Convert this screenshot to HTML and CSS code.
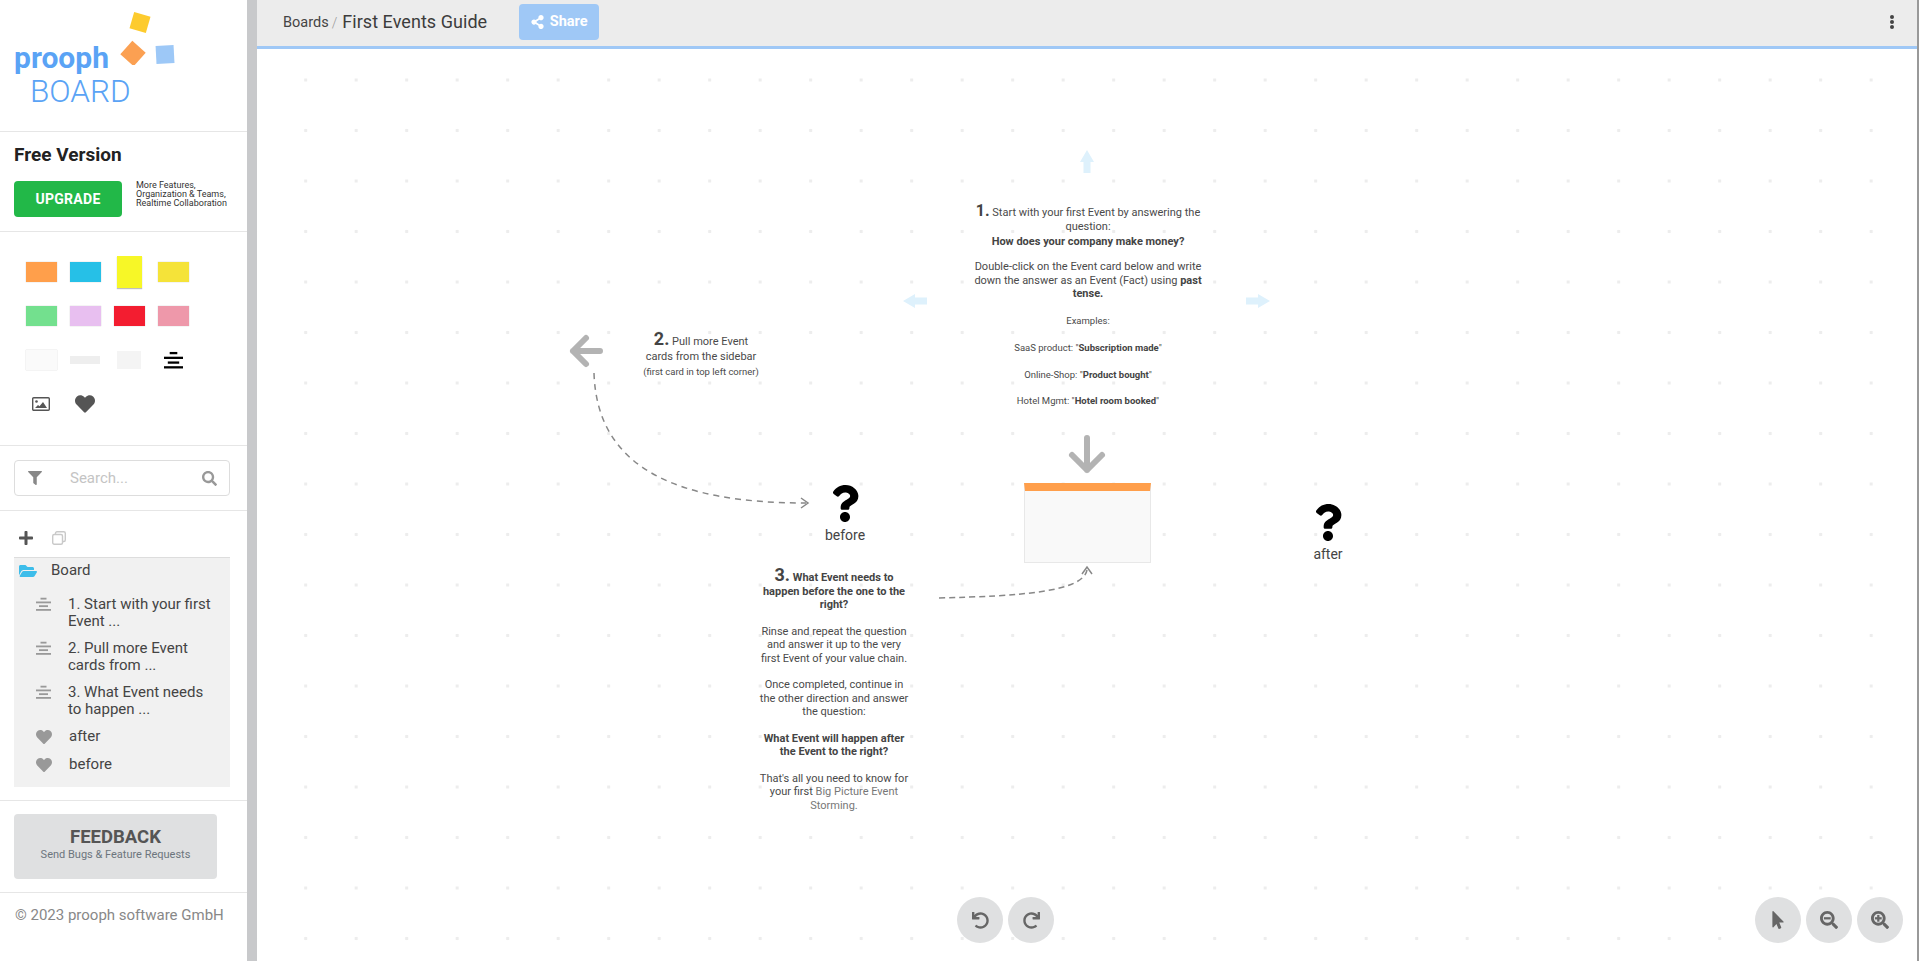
FILE: index.html
```html
<!DOCTYPE html>
<html lang="en">
<head>
  <meta charset="UTF-8">
  <title>First Events Guide - prooph board</title>
  <link rel="stylesheet" href="styles.css">
</head>
<body>
  <!-- icon set -->
  <svg class="icon-defs" aria-hidden="true">
    <symbol id="i-heart" viewBox="0 0 512 512"><path d="M462.3 62.6C407.5 15.9 326 24.3 275.7 76.2L256 96.5l-19.7-20.3C186.1 24.3 104.5 15.9 49.7 62.6c-62.8 53.6-66.1 149.8-9.9 207.9l193.5 199.8c12.5 12.9 32.8 12.9 45.3 0l193.5-199.8c56.3-58.1 53-154.3-9.8-207.9z"/></symbol>
    <symbol id="i-search" viewBox="0 0 512 512"><path d="M505 442.7L405.3 343c-4.5-4.5-10.6-7-17-7H372c27.6-35.3 44-79.7 44-128C416 93.1 322.9 0 208 0S0 93.1 0 208s93.1 208 208 208c48.3 0 92.7-16.4 128-44v16.3c0 6.4 2.5 12.5 7 17l99.7 99.7c9.4 9.4 24.6 9.4 33.9 0l28.3-28.3c9.4-9.4 9.4-24.6.1-34zM208 336c-70.7 0-128-57.2-128-128 0-70.7 57.2-128 128-128 70.7 0 128 57.2 128 128 0 70.7-57.2 128-128 128z"/></symbol>
    <symbol id="i-filter" viewBox="0 0 512 512"><path d="M487.976 0H24.028C2.71 0-8.047 25.866 7.058 40.971L192 225.941V432c0 7.831 3.821 15.17 10.237 19.662l80 55.98C298.02 518.69 320 507.493 320 487.98V225.941l184.947-184.97C520.021 25.896 509.338 0 487.976 0z"/></symbol>
    <symbol id="i-plus" viewBox="0 0 448 512"><path d="M416 208H272V64c0-17.67-14.33-32-32-32h-32c-17.67 0-32 14.33-32 32v144H32c-17.67 0-32 14.33-32 32v32c0 17.67 14.33 32 32 32h144v144c0 17.67 14.33 32 32 32h32c17.67 0 32-14.33 32-32V304h144c17.67 0 32-14.33 32-32v-32c0-17.67-14.33-32-32-32z"/></symbol>
    <symbol id="i-folder" viewBox="0 0 576 512"><path d="M572.694 292.093L500.27 416.248A63.997 63.997 0 0 1 444.989 448H45.025c-18.523 0-30.064-20.093-20.731-36.093l72.424-124.155A64 64 0 0 1 152 256h399.964c18.523 0 30.064 20.093 20.73 36.093zM152 224h328v-48c0-26.51-21.49-48-48-48H272l-64-64H48C21.49 64 0 85.49 0 112v278.046l69.077-118.418C86.214 242.25 117.989 224 152 224z"/></symbol>
    <symbol id="i-share" viewBox="0 0 448 512"><path d="M352 320c-22.608 0-43.387 7.819-59.79 20.895l-102.486-64.054a96.551 96.551 0 0 0 0-41.683l102.486-64.054C308.613 184.181 329.392 192 352 192c53.019 0 96-42.981 96-96S405.019 0 352 0s-96 42.981-96 96c0 7.158.79 14.13 2.276 20.841L155.79 180.895C139.387 167.819 118.608 160 96 160c-53.019 0-96 42.981-96 96s42.981 96 96 96c22.608 0 43.387-7.819 59.79-20.895l102.486 64.054A96.301 96.301 0 0 0 256 416c0 53.019 42.981 96 96 96s96-42.981 96-96-42.981-96-96-96z"/></symbol>
    <symbol id="i-question" viewBox="0 0 384 512"><path d="M202.021 0C122.202 0 70.503 32.703 29.914 91.026c-7.363 10.58-5.093 25.086 5.178 32.874l43.138 32.709c10.373 7.865 25.132 6.026 33.253-4.148 25.049-31.381 43.63-49.449 82.757-49.449 30.764 0 68.816 19.799 68.816 49.631 0 22.552-18.617 34.134-48.993 51.164-35.423 19.86-82.299 44.576-82.299 106.405V320c0 13.255 10.745 24 24 24h72.471c13.255 0 24-10.745 24-24v-5.773c0-42.86 125.268-44.645 125.268-160.627C377.504 66.256 286.902 0 202.021 0zM192 373.459c-38.196 0-69.271 31.075-69.271 69.271 0 38.195 31.075 69.27 69.271 69.27s69.271-31.075 69.271-69.271-31.075-69.27-69.271-69.27z"/></symbol>
    <symbol id="i-undo" viewBox="0 0 512 512"><path d="M212.333 224.333H12c-6.627 0-12-5.373-12-12V12C0 5.373 5.373 0 12 0h48c6.627 0 12 5.373 12 12v78.112C117.773 39.279 184.26 7.47 258.175 8.007c136.906.994 246.448 111.623 246.157 248.532C504.041 393.258 393.12 504 256.333 504c-64.089 0-122.496-24.313-166.51-64.215-5.099-4.622-5.334-12.554-.467-17.42l33.967-33.967c4.474-4.474 11.662-4.717 16.401-.525C170.76 415.336 211.58 432 256.333 432c97.268 0 176-78.716 176-176 0-97.267-78.716-176-176-176-58.496 0-110.28 28.476-142.274 72.333h98.274c6.627 0 12 5.373 12 12v48c0 6.627-5.373 12-12 12z"/></symbol>
    <symbol id="i-pointer" viewBox="0 0 320 512"><path d="M302.189 329.126H196.105l55.831 135.993c3.889 9.428-.555 19.999-9.444 23.999l-49.165 21.427c-9.165 4-19.443-.571-23.332-9.714l-53.053-129.136-86.664 89.138C18.729 472.71 0 463.554 0 447.977V18.299C0 1.899 19.921-6.096 30.277 5.443l284.412 292.542c11.472 11.179 3.007 31.141-12.5 31.141z"/></symbol>
    <symbol id="i-align" viewBox="0 0 20 20"><rect x="6" y="1" width="8" height="2.4"/><rect x="0" y="6" width="20" height="2.4"/><rect x="4" y="11" width="12" height="2.4"/><rect x="0" y="16" width="20" height="2.4"/></symbol>
  </svg>

  <div class="app">
    <aside class="sidebar">
      <section class="logo">
        <span class="logo-prooph">prooph</span>
        <span class="logo-board">BOARD</span>
        <svg class="logo-marks" width="60" height="60" viewBox="120 5 60 60">
          <rect x="131.5" y="14" width="17" height="17" fill="#fdcb2e" transform="rotate(16 140 22.5)"/>
          <rect x="124" y="44.5" width="18" height="18" fill="#fba052" transform="rotate(42 133 53.500)"/>
          <rect x="156" y="45.5" width="18" height="18" fill="#9dc8f7" transform="rotate(-3 165 54)"/>
        </svg>
      </section>

      <section class="plan">
        <h2>Free Version</h2>
        <div class="plan-row">
          <a class="btn-upgrade">UPGRADE</a>
          <p>More Features,<br>Organization &amp; Teams,<br>Realtime Collaboration</p>
        </div>
      </section>

      <section class="palette">
        <div class="cell"><span class="swatch sw-orange"></span></div>
        <div class="cell"><span class="swatch sw-blue"></span></div>
        <div class="cell"><span class="sticky"></span></div>
        <div class="cell"><span class="swatch sw-yellow"></span></div>
        <div class="cell"><span class="swatch sw-green"></span></div>
        <div class="cell"><span class="swatch sw-lilac"></span></div>
        <div class="cell"><span class="swatch sw-red"></span></div>
        <div class="cell"><span class="swatch sw-pink"></span></div>
        <div class="cell"><span class="swatch sw-white"></span></div>
        <div class="cell"><span class="bar"></span></div>
        <div class="cell"><span class="square"></span></div>
        <div class="cell"><svg class="pal-align" width="19" height="19"><use href="#i-align"/></svg></div>
        <div class="cell">
          <svg class="pal-image" width="18" height="14" viewBox="0 0 18 14">
            <rect x="0.7" y="0.7" width="16.6" height="12.6" rx="1" fill="none" stroke="#555" stroke-width="1.4"/>
            <circle cx="4.5" cy="4.5" r="1.3" fill="#555"/>
            <path d="M3 11l3-3 1.5 1.2L11 5l4 6z" fill="#555"/>
          </svg>
        </div>
        <div class="cell"><svg class="pal-heart" width="20" height="20"><use href="#i-heart"/></svg></div>
      </section>

      <section class="search">
        <div class="search-box">
          <svg class="search-filter" width="14" height="14"><use href="#i-filter"/></svg>
          <span class="search-text">Search...</span>
          <svg class="search-icon" width="15" height="15"><use href="#i-search"/></svg>
        </div>
      </section>

      <section class="layers">
        <div class="layers-tools">
          <svg class="tool-plus" width="14" height="16"><use href="#i-plus"/></svg>
          <svg width="14" height="14" viewBox="0 0 14 14" fill="none" stroke="#c9c9c9" stroke-width="1.4">
            <rect x="3.5" y="0.7" width="9.8" height="9.8" rx="1.5"/>
            <rect x="0.7" y="3.5" width="9.8" height="9.8" rx="1.5" fill="#fff"/>
          </svg>
        </div>
        <div class="tree">
          <div class="tree-root">
            <svg class="tree-folder" width="18" height="16"><use href="#i-folder"/></svg>
            <span>Board</span>
          </div>
          <div class="tree-item">
            <svg width="15" height="15"><use href="#i-align"/></svg>
            <span>1. Start with your first Event ...</span>
          </div>
          <div class="tree-item">
            <svg width="15" height="15"><use href="#i-align"/></svg>
            <span>2. Pull more Event cards from ...</span>
          </div>
          <div class="tree-item">
            <svg width="15" height="15"><use href="#i-align"/></svg>
            <span>3. What Event needs to happen ...</span>
          </div>
          <div class="tree-item">
            <svg width="16" height="16"><use href="#i-heart"/></svg>
            <span>after</span>
          </div>
          <div class="tree-item">
            <svg width="16" height="16"><use href="#i-heart"/></svg>
            <span>before</span>
          </div>
        </div>
      </section>

      <section class="feedback">
        <a class="btn-feedback">
          <strong>FEEDBACK</strong>
          <small>Send Bugs &amp; Feature Requests</small>
        </a>
      </section>

      <footer class="copyright">© 2023 prooph software GmbH</footer>
    </aside>

    <div class="gutter"></div>

    <main class="main">
      <header class="topbar">
        <span class="crumb">Boards</span>
        <span class="crumb-sep">/</span>
        <span class="board-title">First Events Guide</span>
        <a class="btn-share">
          <svg width="13" height="14"><use href="#i-share"/></svg>
          Share
        </a>
        <svg class="menu-dots" width="4" height="14" viewBox="0 0 4 14" fill="#444">
          <circle cx="2" cy="2" r="2"/><circle cx="2" cy="7" r="2"/><circle cx="2" cy="12" r="2"/>
        </svg>
      </header>

      <div class="canvas">
        <!-- arrows, viewBox uses page coordinates -->
        <svg class="canvas-lines" width="1660" height="912" viewBox="257 49 1660 912" fill="none">
          <g fill="#def1fc">
            <path d="M1087 150l7 12h-3.500v11h-7v-11h-3.500z"/>
            <path d="M903 301l12-7v3.500h12v7h-12v3.500z"/>
            <path d="M1270 301l-12-7v3.500h-12v7h12v3.500z"/>
          </g>
          <g stroke="#b3b3b3" stroke-width="6" stroke-linecap="round" stroke-linejoin="round">
            <path d="M1087 438v32M1072 455l15 15 15-15"/>
            <path d="M600 351h-27M586 338l-13 13 13 13"/>
          </g>
          <g stroke="#888" stroke-width="1.500">
            <path stroke-dasharray="6 5" d="M594 373C597 470 680 503 806 503"/>
            <path d="M801 498l7 5-7 5"/>
            <path stroke-dasharray="6 4" d="M939 598C1020 596 1083 592 1087 570"/>
            <path d="M1082 574l5-7 5 7"/>
          </g>
        </svg>

        <div class="note note-1">
          <p class="intro"><b class="num">1.</b> Start with your first Event by answering the question:<strong class="lead">How does your company make money?</strong></p>
          <p class="gap">Double-click on the Event card below and write down the answer as an Event (Fact) using <strong>past tense.</strong></p>
          <p class="fine gap">Examples:</p>
          <p class="fine">SaaS product: "<strong>Subscription made</strong>"</p>
          <p class="fine">Online-Shop: "<strong>Product bought</strong>"</p>
          <p class="fine">Hotel Mgmt: "<strong>Hotel room booked</strong>"</p>
        </div>

        <div class="note note-2">
          <p><b class="num">2.</b> Pull more Event<br>cards from the sidebar<br><span class="fine">(first card in top left corner)</span></p>
        </div>

        <div class="note note-3">
          <p><b class="num">3.</b> <strong>What Event needs to happen before the one to the right?</strong></p>
          <p>Rinse and repeat the question and answer it up to the very first Event of your value chain.</p>
          <p>Once completed, continue in the other direction and answer the question:</p>
          <p><strong>What Event will happen after the Event to the right?</strong></p>
          <p>That's all you need to know for your first <span class="link">Big Picture Event Storming.</span></p>
        </div>

        <div class="event-card"></div>

        <div class="hotspot hotspot-before">
          <svg width="28" height="37"><use href="#i-question"/></svg>
          <span>before</span>
        </div>
        <div class="hotspot hotspot-after">
          <svg width="28" height="37"><use href="#i-question"/></svg>
          <span>after</span>
        </div>

        <div class="controls controls-history">
          <a class="round-btn"><svg width="17" height="17"><use href="#i-undo"/></svg></a>
          <a class="round-btn"><svg class="mirror" width="17" height="17"><use href="#i-undo"/></svg></a>
        </div>
        <div class="controls controls-zoom">
          <a class="round-btn"><svg width="12" height="18"><use href="#i-pointer"/></svg></a>
          <a class="round-btn">
            <svg width="18" height="18" viewBox="0 0 512 512"><use href="#i-search" width="512" height="512"/><rect x="112" y="176" width="192" height="64"/></svg>
          </a>
          <a class="round-btn">
            <svg width="18" height="18" viewBox="0 0 512 512"><use href="#i-search" width="512" height="512"/><rect x="112" y="176" width="192" height="64"/><rect x="176" y="112" width="64" height="192"/></svg>
          </a>
        </div>
      </div>
    </main>
  </div>
</body>
</html>
```

FILE: styles.css
```css
* {
  box-sizing: border-box;
}

html, body {
  height: 100%;
  margin: 0;
}

body {
  font-family: Roboto, "Liberation Sans", sans-serif;
  color: #444;
  background: #fff;
  overflow: hidden;
}

p, h2 {
  margin: 0;
}

.icon-defs {
  display: none;
}

.app {
  display: flex;
  height: 100vh;
}

/* sidebar */

.sidebar {
  width: 247px;
  flex-shrink: 0;
  display: flex;
  flex-direction: column;
}

.sidebar section {
  border-bottom: 1px solid #e6e6e6;
}

.gutter {
  width: 10px;
  flex-shrink: 0;
  background: #c8c9cb;
}

.logo {
  position: relative;
  height: 132px;
  padding: 41px 0 0 14px;
}

.logo-prooph {
  display: block;
  font-size: 30px;
  font-weight: 700;
  line-height: 34px;
  color: #5aa3f5;
}

.logo-board {
  display: block;
  margin: -1px 0 0 16px;
  font-size: 31.5px;
  font-weight: 300;
  line-height: 36px;
  color: #5aa3f5;
}

.logo-marks {
  position: absolute;
  left: 120px;
  top: 5px;
}

.plan {
  height: 100px;
  padding: 12px 14px 0;
}

.plan h2 {
  font-size: 19px;
  font-weight: 700;
  line-height: 22px;
  color: #222;
}

.plan-row {
  display: flex;
  align-items: flex-start;
  gap: 14px;
  margin-top: 15px;
}

.plan-row p {
  font-size: 9px;
  line-height: 9px;
  color: #333;
}

.btn-upgrade {
  width: 108px;
  height: 36px;
  flex-shrink: 0;
  display: flex;
  align-items: center;
  justify-content: center;
  background: #22b848;
  border-radius: 4px;
  color: #fff;
  font-size: 14px;
  font-weight: 700;
  letter-spacing: .3px;
}

.palette {
  height: 214px;
  padding: 18px 18px 0 19px;
  display: grid;
  grid-template-columns: repeat(4, 44px);
  grid-auto-rows: 44px;
}

.cell {
  display: flex;
  align-items: center;
  justify-content: center;
}

.swatch {
  width: 31px;
  height: 20px;
  box-shadow: 0 0 1px rgba(0, 0, 0, .25);
}

.sw-orange { background: #ff9f4b; }
.sw-blue { background: #26c0e7; }
.sw-yellow { background: #f5e339; }
.sw-green { background: #73e08e; }
.sw-lilac { background: #e8bff0; }
.sw-red { background: #f31d30; }
.sw-pink { background: #ee98aa; }
.sw-white { background: #fafafa; }

.sticky {
  width: 25px;
  height: 32px;
  background: #f7f727;
  box-shadow: 0 1px 1px rgba(0, 0, 0, .25);
}

.bar {
  width: 30px;
  height: 8px;
  background: #eee;
}

.square {
  width: 24px;
  height: 18px;
  background: #f4f4f4;
}

.pal-align {
  fill: #000;
}

.pal-heart {
  fill: #555;
}

.search {
  height: 65px;
  padding: 14px 17px 0 14px;
}

.search-box {
  height: 36px;
  display: flex;
  align-items: center;
  padding: 0 12px 0 13px;
  border: 1px solid #ddd;
  border-radius: 4px;
}

.search-filter {
  fill: #888;
}

.search-text {
  flex: 1;
  margin-left: 28px;
  font-size: 15px;
  color: #c4c4c4;
}

.search-icon {
  fill: #999;
}

.layers {
  height: 290px;
  padding: 0 17px 0 14px;
}

.layers-tools {
  height: 46px;
  display: flex;
  align-items: center;
  gap: 19px;
  padding: 7px 0 0 5px;
}

.tool-plus {
  fill: #555;
}

.tree {
  height: 230px;
  background: #f1f1f1;
  border-top: 1px solid #ddd;
  font-size: 15px;
  line-height: 17px;
  color: #444;
}

.tree-root {
  display: flex;
  align-items: center;
  gap: 14px;
  padding: 4px 0 0 5px;
  margin-bottom: 17px;
}

.tree-folder {
  fill: #3dbdea;
}

.tree-item {
  display: flex;
  align-items: flex-start;
  gap: 17px;
  min-height: 28px;
  padding: 0 14px 10px 22px;
}

.tree-item svg {
  flex-shrink: 0;
  fill: #999;
  margin-top: 1px;
}

.feedback {
  height: 92px;
  padding: 13px 30px 0 14px;
}

.btn-feedback {
  height: 65px;
  padding-bottom: 5px;
  display: flex;
  flex-direction: column;
  align-items: center;
  justify-content: center;
  background: #dfe0e1;
  border-radius: 4px;
}

.btn-feedback strong {
  font-size: 18.5px;
  line-height: 22px;
  color: #555;
}

.btn-feedback small {
  font-size: 11px;
  line-height: 14px;
  color: #6c757d;
}

.copyright {
  padding: 13px 0 0 15px;
  font-size: 15px;
  color: #888;
}

/* main */

.main {
  flex: 1;
  min-width: 0;
  display: flex;
  flex-direction: column;
  border-right: 2px solid #999;
}

.topbar {
  height: 49px;
  flex-shrink: 0;
  display: flex;
  align-items: center;
  padding: 0 0 3px 26px;
  background: #ececec;
  border-bottom: 3px solid #9fc8f6;
}

.crumb {
  margin-top: 2px;
  font-size: 14.5px;
  color: #444;
}

.crumb-sep {
  margin: 3px 5px 0 3px;
  font-size: 14px;
  font-weight: 300;
  color: #999;
}

.board-title {
  font-size: 18px;
  letter-spacing: .05px;
  color: #3c3c3c;
}

.btn-share {
  width: 80px;
  height: 36px;
  margin-left: 32px;
  display: flex;
  align-items: center;
  justify-content: center;
  gap: 6px;
  background: #9fc8f6;
  border-radius: 4px;
  color: #fff;
  fill: #fff;
  font-size: 14.5px;
  font-weight: 700;
}

.menu-dots {
  margin-left: auto;
  margin-right: 23px;
}

.canvas {
  position: relative;
  flex: 1;
  background-image: radial-gradient(circle, #ededed 1.5px, transparent 2px);
  background-size: 50.5px 50.5px;
  background-position: 23.45px 5.75px;
}

.canvas-lines {
  position: absolute;
  left: 0;
  top: 0;
}

.note {
  position: absolute;
  text-align: center;
  font-size: 11px;
  line-height: 13.5px;
  color: #4a4a4a;
}

.note p {
  margin-bottom: 13px;
}

.note p.intro {
  margin-bottom: 11.5px;
}

.note p.gap {
  margin-bottom: 13.5px;
}

.note strong {
  font-weight: 700;
  color: #444;
}

.note strong.lead {
  display: block;
  margin-top: 2px;
}

.note .num {
  font-size: 18px;
  line-height: 13px;
  font-weight: 700;
  color: #444;
}

.note-1 .num {
  font-size: 16px;
}

.note .fine {
  font-size: 9.5px;
}

.note-1 {
  left: 712px;
  top: 155px;
  width: 238px;
}

.note-2 {
  left: 364px;
  top: 283px;
  width: 160px;
  line-height: 15px;
}

.note-3 {
  left: 501px;
  top: 519px;
  width: 152px;
}

.link {
  color: #777;
}

.event-card {
  position: absolute;
  left: 767px;
  top: 434px;
  width: 127px;
  height: 80px;
  background: #f9f9f9;
  border: 1px solid #e8e8e8;
  border-top: 8px solid #ff9f4b;
}

.hotspot {
  position: absolute;
  width: 60px;
  display: flex;
  flex-direction: column;
  align-items: center;
  font-size: 14px;
  line-height: 16px;
  color: #444;
  fill: #000;
}

.hotspot-before {
  left: 558px;
  top: 436px;
}

.hotspot-after {
  left: 1041px;
  top: 455px;
}

.hotspot span {
  margin-top: 5px;
}

.controls {
  position: absolute;
  bottom: 18px;
  display: flex;
  gap: 5px;
}

.controls-history {
  left: 700px;
}

.controls-zoom {
  right: 14px;
}

.round-btn {
  width: 46px;
  height: 46px;
  display: flex;
  align-items: center;
  justify-content: center;
  border-radius: 50%;
  background: #dfe0e1;
  fill: #666;
}

.mirror {
  transform: scaleX(-1);
}
```
